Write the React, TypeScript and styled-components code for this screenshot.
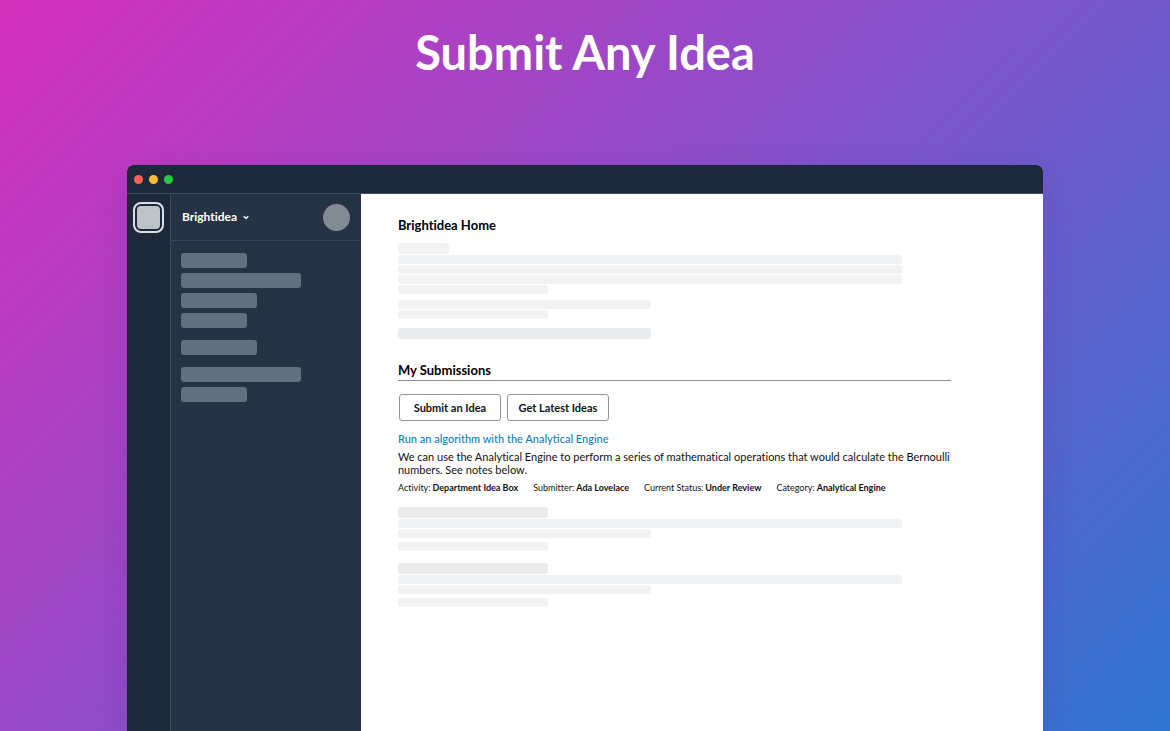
import React from "react";
import styled, { createGlobalStyle } from "styled-components";

const GlobalStyle = createGlobalStyle`
  * { box-sizing: border-box; }
  body { margin: 0; font-family: Lato, "Liberation Sans", sans-serif; color: #111; font-variant-ligatures: none; }
  h1, h2, p, dl, dd { margin: 0; }
  button { font: inherit; color: inherit; cursor: pointer; }
`;

const Page = styled.div`
  min-height: 100vh;
  display: flex;
  flex-direction: column;
  align-items: center;
  background: linear-gradient(135deg, #d42fbc 0%, #954bc8 41%, #2f76d2 100%);
`;

const Title = styled.h1`
  padding: 22px 16px 83px;
  font-size: 47px;
  line-height: 60px;
  font-weight: 700;
  color: #fff;
  text-align: center;
`;

const Window = styled.section`
  flex: 1;
  width: 78.3%;
  display: flex;
  flex-direction: column;
  border-radius: 6px 6px 0 0;
  overflow: hidden;
  background: #fff;
  box-shadow: 0 10px 30px rgba(80, 40, 140, 0.22);
`;

const TitleBar = styled.header`
  height: 29px;
  padding: 0 7px;
  display: flex;
  align-items: center;
  gap: 6px;
  background: #1e283b;
  border-bottom: 1px solid #434d60;
`;

const Dot = styled.span<{ $color: string }>`
  width: 9px;
  height: 9px;
  border-radius: 50%;
  background: ${(p) => p.$color};
`;

const Body = styled.div`
  flex: 1;
  display: flex;
`;

const Rail = styled.nav`
  flex: 0 0 44px;
  padding-top: 8px;
  display: flex;
  flex-direction: column;
  align-items: center;
  background: #1e283b;
  border-right: 1px solid #3b4858;
`;

const WorkspaceTile = styled.button`
  width: 31px;
  height: 31px;
  padding: 2px;
  border: 2px solid #dcdfe3;
  border-radius: 8px;
  background: none;

  &::before {
    content: "";
    display: block;
    height: 100%;
    border-radius: 4px;
    background: #bec3c7;
  }
`;

const Sidebar = styled.aside`
  flex: 0 0 190px;
  background: #253345;
`;

const SidebarHead = styled.div`
  height: 47px;
  padding: 0 11px;
  display: flex;
  align-items: center;
  justify-content: space-between;
  border-bottom: 1px solid #37465a;
`;

const WorkspaceName = styled.button`
  padding: 0;
  display: flex;
  align-items: center;
  gap: 6px;
  border: 0;
  background: none;
  color: #fff;
  font-size: 12px;
  line-height: 16px;
  font-weight: 700;
`;

const Avatar = styled.span`
  width: 27px;
  height: 27px;
  border-radius: 50%;
  background: #828a94;
`;

const ChannelGroups = styled.div`
  padding: 12px 10px;
  display: grid;
  gap: 12px;
`;

const ChannelGroup = styled.div`
  display: grid;
  gap: 5px;
`;

const Channel = styled.span<{ $width: number }>`
  width: ${(p) => p.$width}px;
  height: 15px;
  border-radius: 3px;
  background: #636f7c;
`;

const Main = styled.main`
  flex: 1;
  min-width: 0;
  padding: 21px 92px 24px 37px;
`;

const Heading = styled.h2`
  font-size: 13px;
  line-height: 20px;
  font-weight: 700;
  color: #000;
`;

const SectionHeading = styled(Heading)`
  margin-top: 21px;
  border-bottom: 1px solid #8d8d8f;
`;

const Lines = styled.div<{ $top: number }>`
  margin-top: ${(p) => p.$top}px;
  display: grid;
  gap: 1px;
`;

const Line = styled.span<{ $width: number; $strong?: boolean; $tall?: boolean }>`
  width: ${(p) => p.$width}px;
  max-width: 100%;
  height: ${(p) => (p.$tall ? 11 : 9)}px;
  border-radius: 3px;
  background: ${(p) => (p.$strong ? "#eaebed" : "#f1f2f4")};
`;

const Actions = styled.div`
  padding: 13px 1px 0;
  display: flex;
  gap: 6px;
`;

const ActionButton = styled.button`
  width: 102px;
  height: 27px;
  padding: 0;
  border: 1px solid #949496;
  border-radius: 3px;
  background: #fff;
  font-size: 11px;
  font-weight: 700;
`;

const IdeaLink = styled.a`
  display: block;
  margin-top: 10px;
  font-size: 11px;
  line-height: 16px;
  font-weight: 500;
  font-variant-ligatures: normal;
  color: #0f7fbd;
  text-decoration: none;
`;

const Description = styled.p`
  margin-top: 3px;
  font-size: 11px;
  line-height: 13px;
`;

const Facts = styled.dl`
  margin-top: 6px;
  display: flex;
  flex-wrap: wrap;
  gap: 0 15px;
  font-size: 9px;
  line-height: 12px;
`;

const Fact = styled.div`
  display: flex;
  gap: 2px;

  dd { font-weight: 700; }
`;

const channelGroups = [[66, 120, 76, 66], [76], [120, 66]];

const facts = [
  ["Activity:", "Department Idea Box"],
  ["Submitter:", "Ada Lovelace"],
  ["Current Status:", "Under Review"],
  ["Category:", "Analytical Engine"],
];

function PlaceholderIdea({ top }: { top: number }) {
  return (
    <>
      <Lines $top={top}>
        <Line $width={150} $strong $tall />
        <Line $width={504} />
        <Line $width={253} />
      </Lines>
      <Lines $top={4}>
        <Line $width={150} />
      </Lines>
    </>
  );
}

export default function App() {
  return (
    <>
      <GlobalStyle />
      <Page>
        <Title>Submit Any Idea</Title>
        <Window>
          <TitleBar>
            <Dot $color="#ff5f57" />
            <Dot $color="#febc2e" />
            <Dot $color="#28c840" />
          </TitleBar>
          <Body>
            <Rail>
              <WorkspaceTile type="button" aria-label="Workspace" />
            </Rail>
            <Sidebar>
              <SidebarHead>
                <WorkspaceName type="button">
                  Brightidea
                  <svg width="6" height="5" viewBox="0 0 6 5" fill="none" aria-hidden="true">
                    <path d="M1 1.5 3 3.5 5 1.5" stroke="#fff" strokeWidth="1.2" strokeLinecap="round" strokeLinejoin="round" />
                  </svg>
                </WorkspaceName>
                <Avatar />
              </SidebarHead>
              <ChannelGroups>
                {channelGroups.map((widths, g) => (
                  <ChannelGroup key={g}>
                    {widths.map((w, i) => (
                      <Channel key={i} $width={w} />
                    ))}
                  </ChannelGroup>
                ))}
              </ChannelGroups>
            </Sidebar>
            <Main>
              <Heading>Brightidea Home</Heading>
              <Lines $top={8}>
                <Line $width={51} $tall />
                <Line $width={504} />
                <Line $width={504} />
                <Line $width={504} />
                <Line $width={150} />
              </Lines>
              <Lines $top={6}>
                <Line $width={253} />
                <Line $width={150} />
              </Lines>
              <Lines $top={9}>
                <Line $width={253} $strong $tall />
              </Lines>
              <SectionHeading>My Submissions</SectionHeading>
              <Actions>
                <ActionButton type="button">Submit an Idea</ActionButton>
                <ActionButton type="button">Get Latest Ideas</ActionButton>
              </Actions>
              <IdeaLink href="#analytical-engine">Run an algorithm with the Analytical Engine</IdeaLink>
              <Description>
                We can use the Analytical Engine to perform a series of mathematical operations that would calculate the
                Bernoulli numbers. See notes below.
              </Description>
              <Facts>
                {facts.map(([label, value]) => (
                  <Fact key={label}>
                    <dt>{label}</dt>
                    <dd>{value}</dd>
                  </Fact>
                ))}
              </Facts>
              <PlaceholderIdea top={13} />
              <PlaceholderIdea top={12} />
            </Main>
          </Body>
        </Window>
      </Page>
    </>
  );
}
